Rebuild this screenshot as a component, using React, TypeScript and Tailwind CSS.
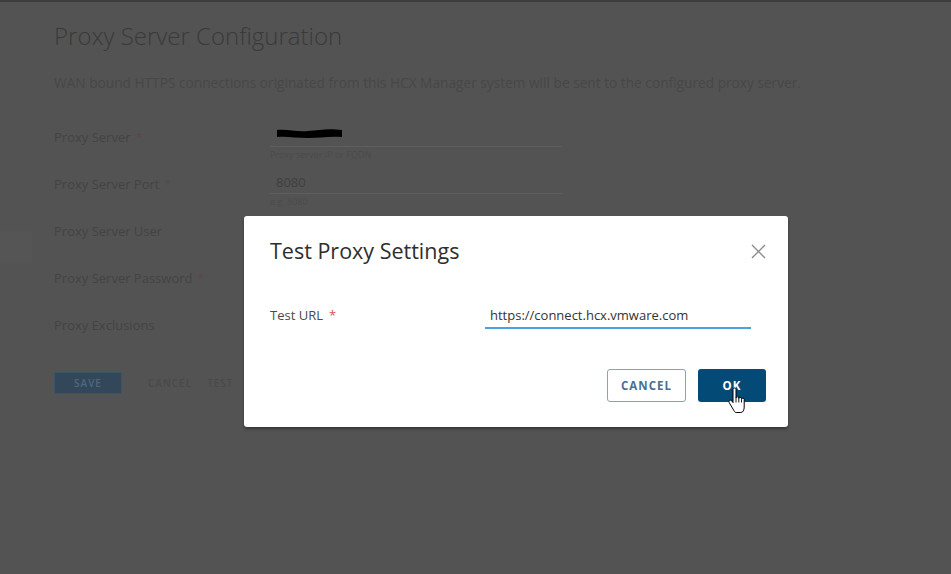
const rows = [
  { label: 'Proxy Server', required: true, value: 'scribble', helper: 'Proxy server IP or FQDN' },
  { label: 'Proxy Server Port', required: true, value: '8080', helper: 'e.g. 8080' },
  { label: 'Proxy Server User', required: false, value: '', helper: '' },
  { label: 'Proxy Server Password', required: true, value: '', helper: '' },
  { label: 'Proxy Exclusions', required: false, value: '', helper: '' },
];

const HandCursor = () => (
  <svg width="19" height="27" viewBox="0 0 19 27" fill="none">
    <path
      d="M5 2.6C5 1.7 5.6 1 6.5 1C7.4 1 8 1.7 8 2.6L8 11C8 10.3 8.6 9.8 9.4 9.8C10.2 9.8 10.8 10.3 10.8 11L10.8 11.6C10.8 10.9 11.4 10.4 12.1 10.4C12.9 10.4 13.5 10.9 13.5 11.6L13.5 12.4C13.5 11.7 14.1 11.2 14.8 11.2C15.6 11.2 16.2 11.7 16.2 12.4L16.2 20C16.2 23 15 25.5 12.8 25.5L8.2 25.5C6.8 25.5 6 24 5 22L1.2 15.6C0.7 14.8 0.9 13.8 1.6 13.4C2.3 13 3.2 13.2 3.7 13.9L5 15.6Z"
      fill="white"
      stroke="black"
      strokeWidth="1"
      strokeLinejoin="round"
    />
    <path d="M8 11V15.5M10.8 11.6V15.5M13.5 12.4V15.5" stroke="black" strokeWidth="0.9" />
  </svg>
);

const App = () => {
  return (
    <div className="relative w-full h-[574px] overflow-hidden bg-[#535353] border-t-2 border-[#3d3d3d] font-['Open_Sans',sans-serif]">
      {/* sidebar edge */}
      <div className="absolute left-0 top-[228px] w-[32px] h-[32px] bg-[#555555]"></div>

      {/* dimmed page */}
      <div className="pl-[54px] pt-[19px]">
        <h1 className="text-[24px] leading-[30px] font-light text-[#3a3a3a]">Proxy Server Configuration</h1>
        <p className="mt-[22px] text-[13.7px] leading-5 text-[#474747]">
          WAN bound HTTPS connections originated from this HCX Manager system will be sent to the configured proxy server.
        </p>

        <div className="mt-[28px] flex flex-col">
          {rows.map((row) => (
            <div key={row.label} className="h-[47px] grid grid-cols-[216px_292px]">
              <div className="mt-[6px] h-5 leading-5 text-[13px] text-[#434343]">
                {row.label}
                {row.required && <span className="ml-[5px] text-[#5a4848]">*</span>}
              </div>
              <div className="flex flex-col">
                <div className="h-[26px] pt-[4px] pl-[6px] text-[13px] leading-5 text-[#3f3f3f] border-b border-[#5e5e5e]">
                  {row.value === 'scribble' ? (
                    <svg width="68" height="14" viewBox="0 0 68 14" className="mt-[1px]">
                      <path d="M1 4C12 3 20 6 32 5C44 4 52 2 66 4L66 11C52 10 44 12 32 12C20 12 10 10 1 11Z" fill="#000" />
                    </svg>
                  ) : (
                    row.value
                  )}
                </div>
                {row.helper && <div className="mt-[2px] text-[9px] leading-3 text-[#4b4b4b]">{row.helper}</div>}
              </div>
            </div>
          ))}
        </div>

        <div className="mt-[16px] flex items-center">
          <button className="w-[68px] h-[22px] rounded-[2px] bg-[#33475a] border border-[#3b5466] text-[10px] font-semibold tracking-[1px] text-[#4e677a]">
            SAVE
          </button>
          <span className="ml-[26px] text-[10px] font-semibold tracking-[1px] text-[#4a4a4a]">CANCEL</span>
          <span className="ml-[15px] text-[10px] font-semibold tracking-[1px] text-[#4a4a4a]">TEST</span>
        </div>
      </div>

      {/* modal */}
      <div className="absolute left-[244px] top-[214px] w-[544px] h-[211px] bg-white rounded-[3px] shadow-[0_2px_3px_rgba(0,0,0,0.35)] px-[26px] pt-[21px]">
        <div className="flex items-center justify-between">
          <h2 className="text-[21.5px] leading-7 text-[#2e2e2e]">Test Proxy Settings</h2>
          <svg width="15" height="15" viewBox="0 0 15 15" className="mr-[-4px]">
            <path d="M1 1L14 14M14 1L1 14" stroke="#8c8c8c" strokeWidth="1.4" />
          </svg>
        </div>

        <div className="mt-[40px] flex items-start">
          <div className="w-[215px] h-5 leading-5 text-[13px] text-[#4a4a4a]">
            Test URL<span className="ml-[6px] text-[#d9534f]">*</span>
          </div>
          <div className="w-[266px] h-[24px] pl-[5px] border-b-2 border-[#4aa3df] text-[13px] leading-5 text-[#333333]">
            https://connect.hcx.vmware.com
          </div>
        </div>

        <div className="mt-[40px] mr-[-4px] flex justify-end gap-[12px]">
          <button className="relative w-[79px] h-[33px] rounded-[3px] border border-[#6faad3] bg-white text-[11.5px] font-bold tracking-[1px] text-[#49708e]">
            CANCEL
          </button>
          <div className="relative">
            <button className="w-[68px] h-[33px] rounded-[3px] bg-[#034a76] text-[11.5px] font-bold tracking-[1px] text-white">
              OK
            </button>
            <div className="absolute left-[30px] top-[18px]">
              <HandCursor />
            </div>
          </div>
        </div>
      </div>
    </div>
  );
};

export default App;
